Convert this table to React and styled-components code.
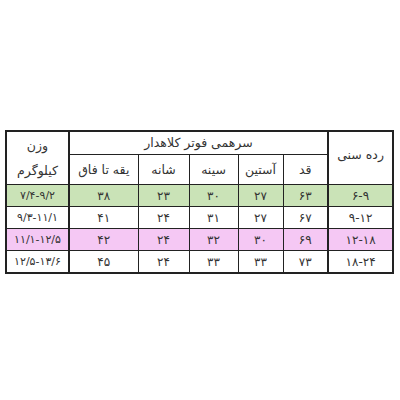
import React from "react";
import styled, {createGlobalStyle} from "styled-components";

const GlobalStyle = createGlobalStyle`
  html, body {
    margin: 0;
    padding: 0;
    background: #ffffff;
  }
  body {
    width: 400px;
    height: 400px;
    font-family: "DejaVu Sans", "Noto Sans", sans-serif;
  }
`;

const Page = styled.div`
  padding: 130px 8px 0 5px;
`;

const Table = styled.table`
  direction: rtl;
  border-collapse: collapse;
  table-layout: fixed;
  width: 387px;
  border: 2px solid #222;
  color: #333;
  text-align: center;
`;

const Head = styled.th`
  font-weight: normal;
  font-size: 12.5px;
  border: 1px solid #222;
  padding: 0;
  height: ${(p) => p.$h || 22}px;
  border-left-width: ${(p) => (p.$split ? 2 : 1)}px;
  line-height: ${(p) => p.$lh || 18}px;
  vertical-align: ${(p) => (p.$top ? "top" : "middle")};
  padding-top: ${(p) => p.$pt || 0}px;
`;

const Row = styled.tr`
  background: ${(p) =>
    p.$tone === "green" ? "#cae3b7" : p.$tone === "pink" ? "#f5c8f4" : "#ffffff"};
`;

const Cell = styled.td`
  border: 1px solid #222;
  border-left-width: ${(p) => (p.$split ? 2 : 1)}px;
  height: 21px;
  padding: 0;
  font-size: ${(p) => (p.$small ? 11 : 12)}px;
  letter-spacing: ${(p) => (p.$small ? "-0.2px" : "normal")};
`;

const Num = styled.span`
  direction: ltr;
  unicode-bidi: isolate;
`;

const widths = [65, 45, 45, 49, 51, 69, 63];

const rows = [
  {tone: "green", age: "۶-۹", vals: ["۶۳", "۲۷", "۳۰", "۲۳", "۳۸"], weight: "۷/۴-۹/۲"},
  {age: "۹-۱۲", vals: ["۶۷", "۲۷", "۳۱", "۲۴", "۴۱"], weight: "۹/۳-۱۱/۱"},
  {tone: "pink", age: "۱۲-۱۸", vals: ["۶۹", "۳۰", "۳۲", "۲۴", "۴۲"], weight: "۱۱/۱-۱۲/۵"},
  {age: "۱۸-۲۴", vals: ["۷۳", "۳۳", "۳۳", "۲۴", "۴۵"], weight: "۱۲/۵-۱۳/۶"},
];

export default function App() {
  return (
    <Page>
      <GlobalStyle />
      <Table>
        <colgroup>
          {widths.map((w, i) => (
            <col key={i} style={{width: w}} />
          ))}
        </colgroup>
        <thead>
          <tr>
            <Head rowSpan={2} $split $top $pt={14}>
              رده سنی
            </Head>
            <Head colSpan={5} $h={22} $split>
              سرهمی فوتر کلاهدار
            </Head>
            <Head rowSpan={2} $lh={25}>
              وزن
              <br />
              کیلوگرم
            </Head>
          </tr>
          <tr>
            <Head $h={29}>قد</Head>
            <Head $h={29}>آستین</Head>
            <Head $h={29}>سینه</Head>
            <Head $h={29}>شانه</Head>
            <Head $h={29} $split>یقه تا فاق</Head>
          </tr>
        </thead>
        <tbody>
          {rows.map((r, i) => (
            <Row key={i} $tone={r.tone}>
              <Cell $split>
                <Num>{r.age}</Num>
              </Cell>
              {r.vals.map((v, j) => (
                <Cell key={j} $split={j === 4}>
                  {v}
                </Cell>
              ))}
              <Cell $small>
                <Num>{r.weight}</Num>
              </Cell>
            </Row>
          ))}
        </tbody>
      </Table>
    </Page>
  );
}
